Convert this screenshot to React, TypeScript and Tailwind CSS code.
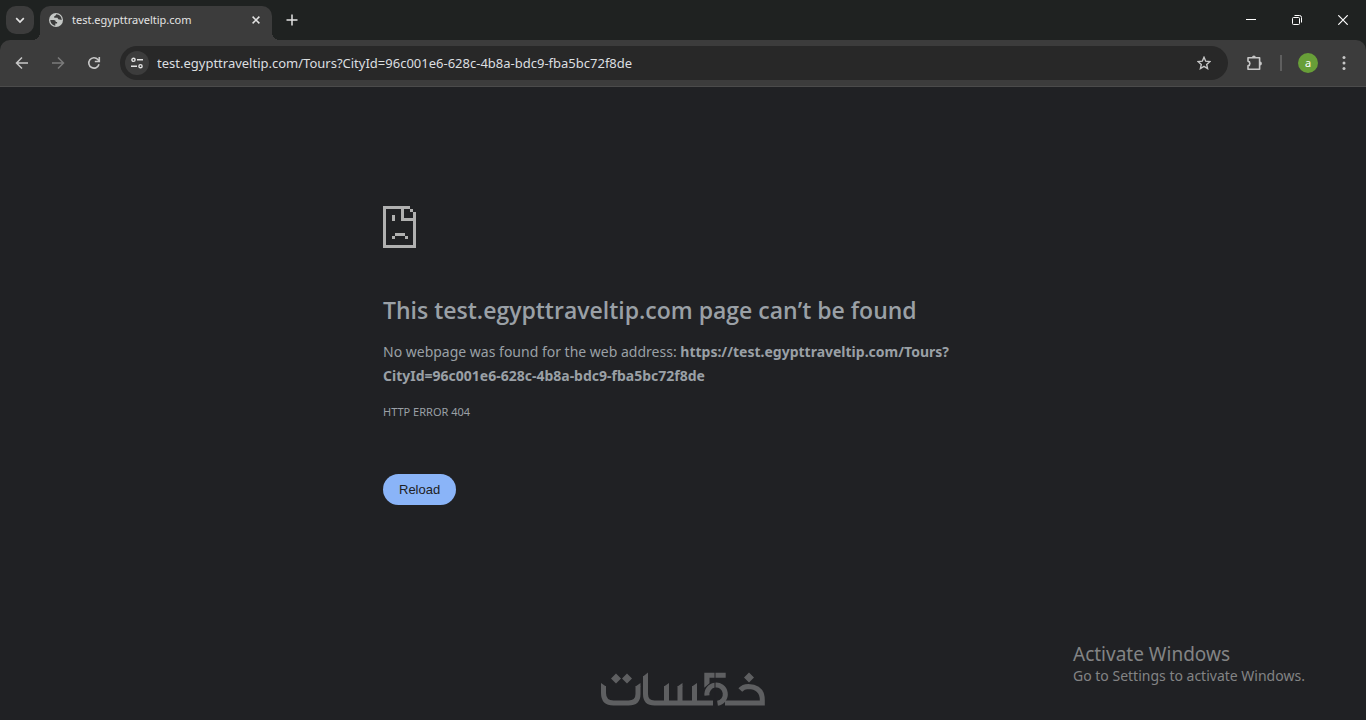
import type { ReactNode, SVGProps } from 'react'

const HOST = 'test.egypttraveltip.com'
const CITY_ID = '96c001e6-628c-4b8a-bdc9-fba5bc72f8de'

function Icon({ size, children, ...rest }: SVGProps<SVGSVGElement> & { size: number }) {
  return (
    <svg width={size} height={size} viewBox={`0 0 ${size} ${size}`} fill="none" stroke="currentColor" aria-hidden="true" {...rest}>
      {children}
    </svg>
  )
}

function IconButton({ label, className = '', children }: { label: string; className?: string; children: ReactNode }) {
  return (
    <button type="button" aria-label={label} className={`flex shrink-0 items-center justify-center ${className}`}>
      {children}
    </button>
  )
}

function TabStrip() {
  return (
    <header className="flex h-10 bg-[#1f2221] pl-[6px] text-[#e3e3e3]">
      <IconButton label="Search tabs" className="mt-[6px] h-7 w-7 rounded-[10px] bg-[#3c3c3c]">
        <Icon size={10} strokeWidth={1.7}><path d="M1.2 3.2 5 7l3.800-3.800" /></Icon>
      </IconButton>
      <div className="relative ml-[6px] mt-[6px] flex w-[232px] items-center rounded-t-[10px] bg-[#3c3c3c] pb-[6px] pl-2 pr-2">
        {/* flares where the tab meets the toolbar */}
        <span className="absolute -left-2 bottom-0 h-2 w-2 bg-[radial-gradient(circle_at_0_0,#1f2221_8px,#3c3c3c_8px)]" />
        <span className="absolute -right-2 bottom-0 h-2 w-2 bg-[radial-gradient(circle_at_100%_0,#1f2221_8px,#3c3c3c_8px)]" />
        <Icon size={16} stroke="none">
          <circle cx="8" cy="8" r="7" fill="#c4c7c5" />
          <path d="M2.300 8h3.500c1.300 0 2 .8 2 1.900h1.300v1.500H7.300v2.300C4.500 13.400 2.300 11 2.300 8ZM8.200 2.300c-.3 1.200-.8 1.600-2 1.900v1.500h3.300c.3 1.300 1.200 1.900 2.400 1.900.7 0 1.200.2 1.800.5C13.700 4.900 11.500 2.500 8.200 2.300Z" fill="#3c3c3c" />
        </Icon>
        <span className="ml-2 flex-1 text-[11px] leading-4">{HOST}</span>
        <IconButton label="Close tab" className="h-4 w-4">
          <Icon size={8} strokeWidth={1.5}><path d="m.6.6 6.800 6.800M7.400.6.6 7.400" /></Icon>
        </IconButton>
      </div>
      <IconButton label="New tab" className="ml-[6px] h-10 w-7">
        <Icon size={12} strokeWidth={1.5}><path d="M6 .5v11M.5 6h11" /></Icon>
      </IconButton>
      <div className="ml-auto flex text-white">
        <IconButton label="Minimize" className="h-10 w-[46px]">
          <Icon size={10}><path d="M0 4.500h10" /></Icon>
        </IconButton>
        <IconButton label="Restore" className="h-10 w-[46px]">
          <Icon size={10}>
            <rect x=".5" y="2.500" width="7" height="7" rx="1" />
            <path d="M2.500.500h5a2 2 0 0 1 2 2v5" />
          </Icon>
        </IconButton>
        <IconButton label="Close" className="h-10 w-[46px]">
          <Icon size={10} strokeWidth={1.2}><path d="m.3.3 9.400 9.400M9.700.3.3 9.700" /></Icon>
        </IconButton>
      </div>
    </header>
  )
}

function Toolbar() {
  return (
    <div className="bg-[#1f2221]">
      <nav className="flex h-[47px] items-center rounded-t-[10px] border-b border-[#4b4b4b] bg-[#3c3c3c] px-2 text-[#c7c7c7]">
        <IconButton label="Back" className="h-7 w-7">
          <Icon size={14} strokeWidth={1.5}><path d="M13 7H2M7 1.500 1.500 7 7 12.500" /></Icon>
        </IconButton>
        <IconButton label="Forward" className="ml-2 h-7 w-7 text-[#7b7b7b]">
          <Icon size={14} strokeWidth={1.5}><path d="M1 7h11M7 1.500 12.500 7 7 12.500" /></Icon>
        </IconButton>
        <IconButton label="Reload page" className="ml-2 h-7 w-7">
          <Icon size={14} strokeWidth={1.6}><path d="M12 8.300A5.200 5.200 0 1 1 10.900 3.500L12 4.700M12.300 1v4.500H7.800" /></Icon>
        </IconButton>
        <div className="ml-3 flex h-[34px] flex-1 items-center rounded-full bg-[#282828] pl-[5px] pr-[10px]">
          <IconButton label="View site information" className="h-6 w-6 rounded-full bg-[#3c3c3c] text-[#e3e3e3]">
            <Icon size={12} strokeWidth={1.4}>
              <circle cx="2.500" cy="2.800" r="1.600" />
              <path d="M6 2.800h6M0 9.200h6" />
              <circle cx="9.500" cy="9.200" r="1.600" />
            </Icon>
          </IconButton>
          <input
            aria-label="Address"
            readOnly
            className="ml-2 min-w-0 flex-1 bg-transparent text-[13px] leading-5 text-[#dcdfe0] outline-none"
            value={`${HOST}/Tours?CityId=${CITY_ID}`}
          />
          <IconButton label="Bookmark this tab" className="h-7 w-7">
            <Icon size={14} strokeWidth={1.4}><path d="m7 1.300 1.700 3.900 4.200.4-3.200 2.800.9 4.200L7 10.400l-3.600 2.200.9-4.200L1.100 5.600l4.200-.4Z" /></Icon>
          </IconButton>
        </div>
        <IconButton label="Extensions" className="ml-3 h-7 w-7">
          <Icon size={18} strokeWidth={1.6} strokeLinejoin="round">
            <path d="M3 3.800h11.600v11.400H3v-3.300c2.500-.6 2.500-4.200 0-4.800Z" />
            <path d="M7 3.400a1.900 1.900 0 0 1 3.800 0ZM15 7.600a1.900 1.900 0 0 1 0 3.800Z" fill="currentColor" stroke="none" />
          </Icon>
        </IconButton>
        <span className="ml-3 h-4 w-[2px] bg-[#5f5f5f]" />
        <button type="button" aria-label="Profile" className="ml-4 h-5 w-5 rounded-full bg-[#689f38] text-center text-[11px] leading-[18px] text-white">a</button>
        <IconButton label="Menu" className="ml-3 h-7 w-7">
          <Icon size={16} fill="currentColor" stroke="none">
            <circle cx="8" cy="2.500" r="1.500" />
            <circle cx="8" cy="8" r="1.500" />
            <circle cx="8" cy="13.500" r="1.500" />
          </Icon>
        </IconButton>
      </nav>
    </div>
  )
}

function SadPage() {
  return (
    <svg width="33" height="42" viewBox="0 0 33 42" fill="#b0b0b0" shapeRendering="crispEdges" aria-hidden="true">
      <path d="M0 0h27v3h-6v9h12v30H0ZM3 3v36h27V15H18V3Z" fillRule="evenodd" />
      <path d="M27 3h3v3h-3ZM30 6h3v6h-3ZM9 9h3v6H9ZM12 27h10v3H12ZM9 30h3v3H9ZM22 30h3v3h-3Z" />
    </svg>
  )
}

function KhamsatLogo() {
  return (
    <svg role="img" aria-label="خمسات" width="166" height="36" viewBox="0 0 166 36" fill="none" stroke="#5e5f61" strokeWidth="5">
      <path d="M3.500 14v7q0 10 10 10h15q9.500 0 9.500-9v-8" />
      <path d="M45.500 4v18q0 9 9 9H113M66.500 14v17M80 14v17M94.500 14v17" />
      <path d="M107 23.500a9.200 9.200 0 1 1 10.500 7.800" />
      <path d="M125 31h37.300v-3q0-13-14-13.500-5 0-8 3.500" />
      {/* slanted stem ends, bar of the five, dots */}
      <path
        d="M1 11l5 3.500H1ZM40.500 11l-5 3.500h5ZM48 .5 43 4.500h5ZM69 11l-5 3.500h5ZM82.500 11l-5 3.500h5ZM97 11l-5 3.500h5ZM104.300.8h21.400v5h-16.200v5.400l-5.200 4.500ZM16 1.500l5 5-5 5-5-5ZM27 1.500l5 5-5 5-5-5ZM149 .5l5 5-5 5-5-5Z"
        fill="#5e5f61"
        stroke="none"
      />
      <path d="M115 0v36" stroke="#202124" strokeWidth="1" />
    </svg>
  )
}

export default function App() {
  return (
    <div className="flex min-h-screen flex-col bg-[#202124] font-['Noto_Sans',sans-serif]">
      <TabStrip />
      <Toolbar />
      <main className="mx-auto w-full max-w-[600px] flex-1 pt-[119px] text-[#9aa0a6]">
        <SadPage />
        <h1 className="mt-[46px] font-['Open_Sans',sans-serif] text-[23px] font-semibold leading-8">This {HOST} page can’t be found</h1>
        <p className="mt-[14px] text-[14px] leading-6">
          No webpage was found for the web address: <strong>https://{HOST}/Tours?<wbr />CityId={CITY_ID}</strong>
        </p>
        <p className="mt-3 text-[11px] leading-6">HTTP ERROR 404</p>
        <button type="button" className="mt-[50px] h-[31px] rounded-full bg-[#8ab4f8] px-4 font-['Liberation_Sans',sans-serif] text-[13px] text-[#202124]">
          Reload
        </button>
      </main>
      <footer className="grid grid-cols-[1fr_auto_1fr] items-end pb-3">
        <span />
        <KhamsatLogo />
        <div className="mb-[22px] mr-[57px] w-[236px] justify-self-end text-[#838485]">
          <p className="text-[19px] leading-6">Activate Windows</p>
          <p className="text-[14px] leading-5">Go to Settings to activate Windows.</p>
        </div>
      </footer>
    </div>
  )
}
